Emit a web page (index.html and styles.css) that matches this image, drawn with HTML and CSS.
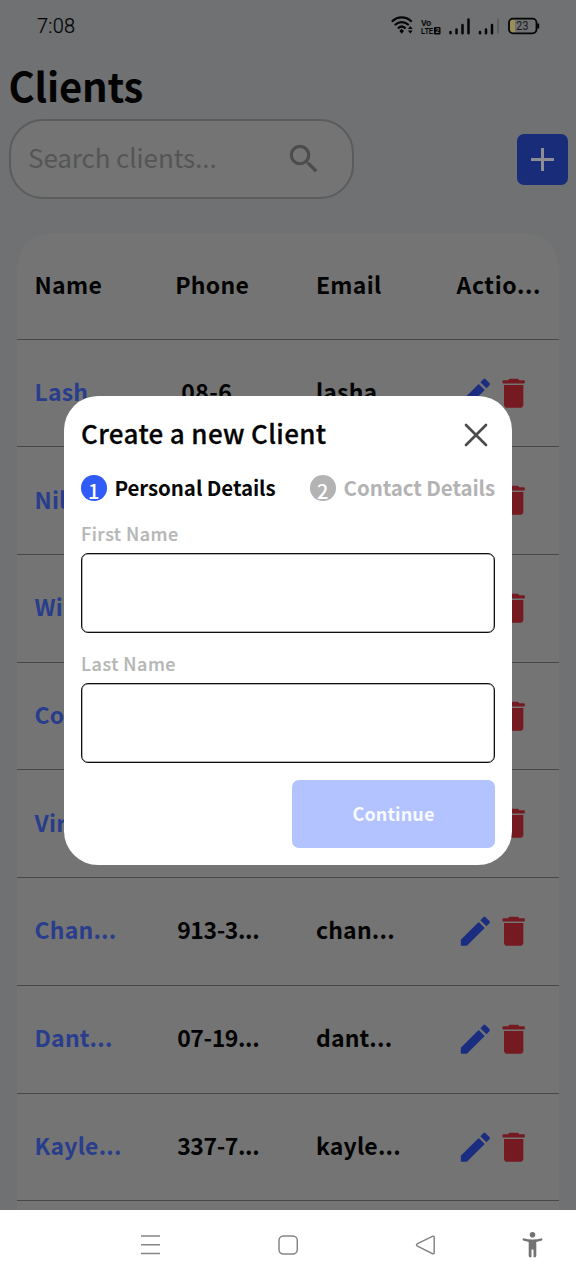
FILE: index.html
```html
<!DOCTYPE html>
<html lang="en">
<head>
<meta charset="utf-8">
<title>Clients</title>
<link rel="stylesheet" href="styles.css">
</head>
<body>
<svg class="defs" aria-hidden="true">
  <symbol id="edit" viewBox="0 0 24 24"><path d="M3 17.25V20.6c0 .2.2.4.4.4H6.75L17.81 9.94l-3.75-3.75L3 17.25zM20.71 7.04c.39-.39.39-1.02 0-1.41l-2.34-2.34c-.39-.39-1.02-.39-1.41 0l-1.83 1.83 3.75 3.75 1.83-1.83z"/></symbol>
  <symbol id="trash" viewBox="0 0 24 24"><path d="M6.200 19c0 1.100.9 2 2 2h8c1.100 0 2-.9 2-2V6.800H6.200V19zM18.600 3.800H15.700l-.6-.6c-.15-.15-.4-.25-.7-.25H10c-.3 0-.55.1-.7.25l-.6.600H5.800c-.8 0-.8 2.100 0 2.100h12.800c.8 0 .8-2.100 0-2.100z"/></symbol>
</svg>
<div class="screen">
  <header class="status">
    <span class="time">7:08</span>
    <svg class="status-icons" width="150" height="24" viewBox="0 0 150 24">
      <g fill="none" stroke="#050505" stroke-width="2.300" stroke-linecap="round">
        <path d="M2.500 9c5.200-4.900 13.300-4.900 18.500 0M5.500 12.500c3.600-3.300 8.900-3.300 12.500 0M8.600 15.800c1.900-1.600 4.400-1.600 6.300 0"/>
      </g>
      <path d="M11.700 16.700l2.300 2.300-2.300 2.700-2.300-2.700zM20.300 14l2.400 2.900h-4.800zM20.300 21.500l2.400-2.900h-4.800z" fill="#050505"/>
      <text class="volte" transform="translate(31 13.600) scale(.9 1.050)">Vo</text>
      <text class="volte" transform="translate(31 22.300) scale(.72 1.050)">LTE</text>
      <rect x="44" y="15" width="6.500" height="7.500" rx="1" fill="#050505"/>
      <text class="sim" x="45.500" y="21.200">2</text>
      <g stroke="#050505" stroke-width="2.500" stroke-linecap="round">
        <path d="M60.500 20v1.200M66.500 17.500v3.700M72.500 13v8.200M78.500 7.500v13.700M90 20v1.200M96 17.500v3.700M102 13v8.200"/>
        <path d="M108 7.500v13.500" stroke="#5b5c5d" stroke-width="1.800"/>
      </g>
      <path d="M121 7.500h4v13h-4q-1.500 0-1.500-2v-9q0-2 1.500-2z" fill="#998e58"/>
      <rect x="119" y="6.700" width="27.500" height="14.600" rx="4" fill="none" stroke="#050505" stroke-width="1.800"/>
      <path d="M148.200 11.500v5" stroke="#050505" stroke-width="2"/>
      <text class="charge" x="126" y="18.300" textLength="12.500" lengthAdjust="spacingAndGlyphs">23</text>
    </svg>
  </header>
  <h1 class="title">Clients</h1>
  <div class="toolbar">
    <div class="search">
      <span class="placeholder">Search clients...</span>
      <svg width="38" height="38" viewBox="0 0 24 24" fill="#4b4c4c"><path d="M15.500 14h-.79l-.28-.27A6.471 6.471 0 0 0 16 9.500 6.500 6.500 0 1 0 9.500 16c1.610 0 3.090-.59 4.230-1.570l.27.28v.79l5 4.990L20.490 19l-4.990-5zm-6 0C7.010 14 5 11.990 5 9.500S7.010 5 9.500 5 14 7.010 14 9.500 11.990 14 9.500 14z"/></svg>
    </div>
    <div class="add"><svg width="25" height="25" viewBox="0 0 25 25"><path d="M1 12.500h23M12.500 1v23" stroke="#8c8e94" stroke-width="3"/></svg></div>
  </div>
  <main class="table">
    <div class="row head"><span>Name</span><span>Phone</span><span>Email</span><span class="actions">Actio...</span></div>
    <div class="row"><span class="name">Lash...</span><span class="phone shifted">08-6...</span><span class="mail">lasha...</span><span class="icons"><svg class="edit"><use href="#edit"/></svg><svg class="trash"><use href="#trash"/></svg></span></div>
    <div class="row"><span class="name">Nil</span><span></span><span></span><span class="icons"><svg class="edit"><use href="#edit"/></svg><svg class="trash"><use href="#trash"/></svg></span></div>
    <div class="row"><span class="name">Wi...</span><span></span><span></span><span class="icons"><svg class="edit"><use href="#edit"/></svg><svg class="trash"><use href="#trash"/></svg></span></div>
    <div class="row"><span class="name">Co...</span><span></span><span></span><span class="icons"><svg class="edit"><use href="#edit"/></svg><svg class="trash"><use href="#trash"/></svg></span></div>
    <div class="row"><span class="name">Vir...</span><span></span><span></span><span class="icons"><svg class="edit"><use href="#edit"/></svg><svg class="trash"><use href="#trash"/></svg></span></div>
    <div class="row"><span class="name">Chan...</span><span class="phone">913-3...</span><span class="mail">chan...</span><span class="icons"><svg class="edit"><use href="#edit"/></svg><svg class="trash"><use href="#trash"/></svg></span></div>
    <div class="row"><span class="name">Dant...</span><span class="phone">07-19...</span><span class="mail">dant...</span><span class="icons"><svg class="edit"><use href="#edit"/></svg><svg class="trash"><use href="#trash"/></svg></span></div>
    <div class="row"><span class="name">Kayle...</span><span class="phone">337-7...</span><span class="mail">kayle...</span><span class="icons"><svg class="edit"><use href="#edit"/></svg><svg class="trash"><use href="#trash"/></svg></span></div>
  </main>
</div>
<nav class="nav">
  <svg width="576" height="70" viewBox="0 0 576 70" fill="none" stroke="#858585" stroke-width="1.500">
    <path d="M141 26h19M141 34.800h19M141 43.500h19"/>
    <rect x="279" y="26" width="18.300" height="18" rx="4.500"/>
    <path d="M432.500 26.300l-15 7.300q-2 1.300 0 2.500l15 7.600q1.700.500 1.700-1.200V27.500q0-1.700-1.700-1.200z"/>
    <g fill="#737373" stroke="none"><circle cx="532.500" cy="24.800" r="2.800"/><path d="M523.300 28.200q9.200 2.600 18.400 0 1.500.9.200 2.400l-5.600 1.500v14q-.6 2-2.800 1v-7.600h-2v7.600q-2.200 1-2.800-1v-14l-5.600-1.500q-1.300-1.500.2-2.400z"/></g>
  </svg>
</nav>
<section class="modal" role="dialog">
  <div class="modal-head">
    <h2>Create a new Client</h2>
    <svg width="24" height="24" viewBox="0 0 24 24"><path d="M2 2l20 20M22 2L2 22" stroke="#4c4c4c" stroke-width="2.700" stroke-linecap="round"/></svg>
  </div>
  <div class="steps">
    <div class="step on"><i>1</i><b>Personal Details</b></div>
    <div class="step"><i>2</i><b>Contact Details</b></div>
  </div>
  <label class="first">First Name</label>
  <div class="input"></div>
  <label class="last">Last Name</label>
  <div class="input"></div>
  <button class="continue">Continue</button>
</section>
</body>
</html>
```
FILE: styles.css
```css
* { box-sizing: border-box; }
body, h1, h2 { margin: 0; }
body {
  width: 576px;
  height: 1280px;
  overflow: hidden;
  background: #6f7173;
  color: #030303;
  font-family: "Noto Sans CJK SC", "Noto Sans", sans-serif;
}
.defs { position: absolute; width: 0; height: 0; }
.screen { height: 1210px; overflow: hidden; }
.status { height: 52px; display: flex; justify-content: space-between; align-items: center; padding: 0 36px 0 37px; }
.status-icons { margin-bottom: 4px; }
.time { font: 300 20px/24px Roboto, sans-serif; letter-spacing: .2px; -webkit-text-stroke: .2px #030303; }
.volte { font: 700 9.500px "Liberation Sans", sans-serif; fill: #050505; }
.sim { font: 700 7px "Liberation Sans", sans-serif; fill: #6f7173; }
.charge { font: 13px Roboto, sans-serif; fill: #1c1c1c; }
.title { height: 67px; padding-left: 8.500px; font-size: 40px; line-height: 67px; font-weight: 700; letter-spacing: -.2px; }
.toolbar { display: flex; justify-content: space-between; align-items: center; padding: 0 8px 0 8.500px; height: 80px; }
.search { width: 345.500px; height: 80px; border: 2px solid #5a5c5d; border-radius: 34px; background: #747474; display: flex; align-items: center; justify-content: space-between; padding: 0 29px 0 17.500px; }
.placeholder { font-size: 26px; color: #545555; padding-bottom: 5px; letter-spacing: -.1px; }
.search svg { display: block; }
.add { width: 51px; height: 51px; border-radius: 7px; background: #192c79; display: grid; place-items: center; }
.table { margin: 34px 17px 0; background: #747474; border-radius: 34px 34px 0 0; height: 990px; }
.row { height: 107.700px; border-bottom: 1.800px solid #484848; padding-left: 17.500px; display: grid; grid-template-columns: 140.700px 140.700px 140.700px 1fr; align-items: center; font-size: 23px; font-weight: 700; line-height: 34px; white-space: nowrap; letter-spacing: .2px; }
.row > span { padding-bottom: 4px; }
.head { height: 106.700px; letter-spacing: .3px; }
.head .actions { letter-spacing: .6px; }
.name { color: #283d8c; }
.phone { padding-left: 2px; letter-spacing: -.4px; }
.shifted { padding-left: 6px; letter-spacing: .5px; }
.row > .icons { display: flex; padding-bottom: 0; margin-left: -1px; }
.icons svg { width: 38.700px; height: 38.700px; flex: none; }
.edit { fill: #1b2d80; }
.trash { fill: #751a21; }
.nav { height: 70px; background: #fff; }
.nav svg { display: block; }
.modal { position: absolute; left: 64px; top: 396px; width: 448px; height: 469px; border-radius: 34px; background: #fff; padding: 17px 17px; display: flex; flex-direction: column; }
.modal-head { height: 43px; display: flex; justify-content: space-between; align-items: center; padding-right: 7px; }
h2 { font-size: 26px; line-height: 40px; font-weight: 500; letter-spacing: .35px; padding-bottom: 3px; -webkit-text-stroke: .3px #030303; }
.steps { height: 65px; display: flex; justify-content: space-between; align-items: center; color: #b3b3b3; }
.step { display: flex; align-items: center; gap: 8px; }
.step i { width: 25.500px; height: 25.500px; border-radius: 50%; background: #b3b3b3; color: #fff; font-style: normal; font-weight: 500; font-size: 20px; line-height: 31px; text-align: center; }
.step b { font-size: 20.500px; line-height: 30px; font-weight: 700; letter-spacing: -.1px; padding-bottom: 2px; }
.on { color: #080808; }
.on i { background: #315bf6; }
label { font-size: 18px; line-height: 26px; font-weight: 500; color: #b6b6b6; letter-spacing: .5px; -webkit-text-stroke: .2px #b6b6b6; }
.input { height: 80px; border: 1.500px solid #101010; box-shadow: inset 0 0 0 .5px #666; border-radius: 7px; flex: none; }
.first { height: 33.500px; flex: none; }
.last { height: 32.800px; margin-top: 17px; flex: none; }
.continue { align-self: flex-end; margin-top: 17px; width: 203px; height: 68px; flex: none; border: 0; border-radius: 7px; background: #b3c3ff; color: #f8faff; font: 700 18px "Noto Sans CJK SC", sans-serif; letter-spacing: .1px; padding-bottom: 3px; }
```
